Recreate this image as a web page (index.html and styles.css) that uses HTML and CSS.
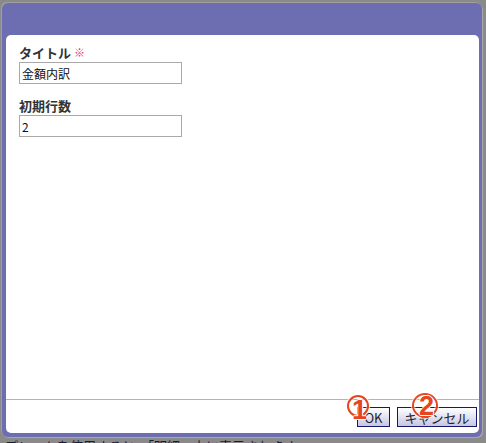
FILE: index.html
```html
<!DOCTYPE html>
<html lang="ja">
<head>
<meta charset="utf-8">
<title>ダイアログ</title>
<link rel="stylesheet" href="styles.css">
</head>
<body>
<div class="page">
  <div class="dialog">
    <div class="panel">
      <div class="form">
        <div class="field">
          <label class="label">タイトル <span class="req">※</span></label>
          <input class="input" type="text" value="金額内訳">
        </div>
        <div class="field">
          <label class="label">初期行数</label>
          <input class="input" type="text" value="2">
        </div>
      </div>
      <div class="footer">
        <button class="btn btn-ok">OK<span class="badge badge-1"><span class="digit">1</span></span></button>
        <button class="btn btn-cancel">キャンセル<span class="badge badge-2"><span class="digit">2</span></span></button>
      </div>
    </div>
  </div>
  <div class="backtext">プレートを使用すると、「明細」上に表示されます。</div>
</div>
</body>
</html>
```

FILE: styles.css
```css
html, body {
  margin: 0;
  padding: 0;
}
body {
  background: #8a8a8a;
  overflow: hidden;
  font-family: "Noto Sans CJK JP", "Noto Sans", sans-serif;
}
.page {
  padding: 3px 4px 0 2px;
  height: 443px;
  box-sizing: border-box;
  overflow: hidden;
}
.dialog {
  width: 480px;
  height: 434px;
  box-sizing: border-box;
  background: #6d6db1;
  border-radius: 6px;
  padding: 32px 3px 4px 4px;
  display: flex;
  flex-direction: column;
  box-shadow: 1px 1px 0 #a9a9a9, -1px -1px 0 #a0a0a0;
}
.panel {
  flex: 1;
  background: #ffffff;
  border-radius: 5px;
  display: flex;
  flex-direction: column;
}
.form {
  flex: 1;
  padding: 9px 13px 0 13px;
}
.field + .field {
  margin-top: 13px;
}
.label {
  display: block;
  font-size: 13px;
  line-height: 17px;
  font-weight: bold;
  color: #333333;
  margin-bottom: 1px;
}
.req {
  font-size: 11px;
  font-weight: normal;
  color: #d8387e;
  vertical-align: 1px;
}
.input {
  display: block;
  width: 163px;
  height: 22px;
  box-sizing: border-box;
  border: 1px solid #a9a9a9;
  padding: 0 2px;
  margin: 0;
  font-family: "Noto Sans CJK JP", sans-serif;
  font-size: 12px;
  color: #111111;
  background: #ffffff;
  outline: none;
}
.field + .field .input {
  margin-top: 1px;
}
.footer {
  height: 34px;
  box-sizing: border-box;
  border-top: 1px solid #b4b4b4;
  display: flex;
  justify-content: flex-end;
  align-items: flex-start;
  gap: 7px;
  padding: 7px 2px 0 0;
}
.btn {
  position: relative;
  height: 20px;
  box-sizing: border-box;
  border: 1px solid #16166c;
  border-radius: 0;
  background: linear-gradient(#ffffff, #c6c6e4);
  color: #222222;
  font-family: "Noto Sans CJK JP", sans-serif;
  font-size: 13px;
  line-height: 17px;
  padding: 0;
  margin: 0;
}
.btn-ok {
  width: 33px;
}
.btn-cancel {
  width: 80px;
}
.badge {
  position: absolute;
  width: 22px;
  height: 22px;
  box-sizing: border-box;
  border: 2px solid #e6461f;
  border-radius: 50%;
  box-shadow: 0 0 0 1px rgba(255,255,255,0.8), inset 0 0 0 1px rgba(255,255,255,0.6);
}
.badge-1 {
  left: -11px;
  top: -13px;
}
.badge-2 {
  left: 14px;
  top: -15px;
  width: 26px;
  height: 25px;
}
.digit {
  position: absolute;
  font-family: "Liberation Sans", Arial, sans-serif;
  font-weight: bold;
  font-size: 27px;
  line-height: 27px;
  color: #e6461f;
  text-shadow: 1px 0 0 #fff, -1px 0 0 #fff, 0 1px 0 #fff, 0 -1px 0 #fff;
}
.badge-1 .digit {
  left: 3px;
  top: 0px;
}
.badge-2 .digit {
  left: 5px;
  top: -2px;
}
.backtext {
  font-size: 13px;
  line-height: 18px;
  color: #1a1a3a;
  padding-left: 3px;
  white-space: nowrap;
}
```
